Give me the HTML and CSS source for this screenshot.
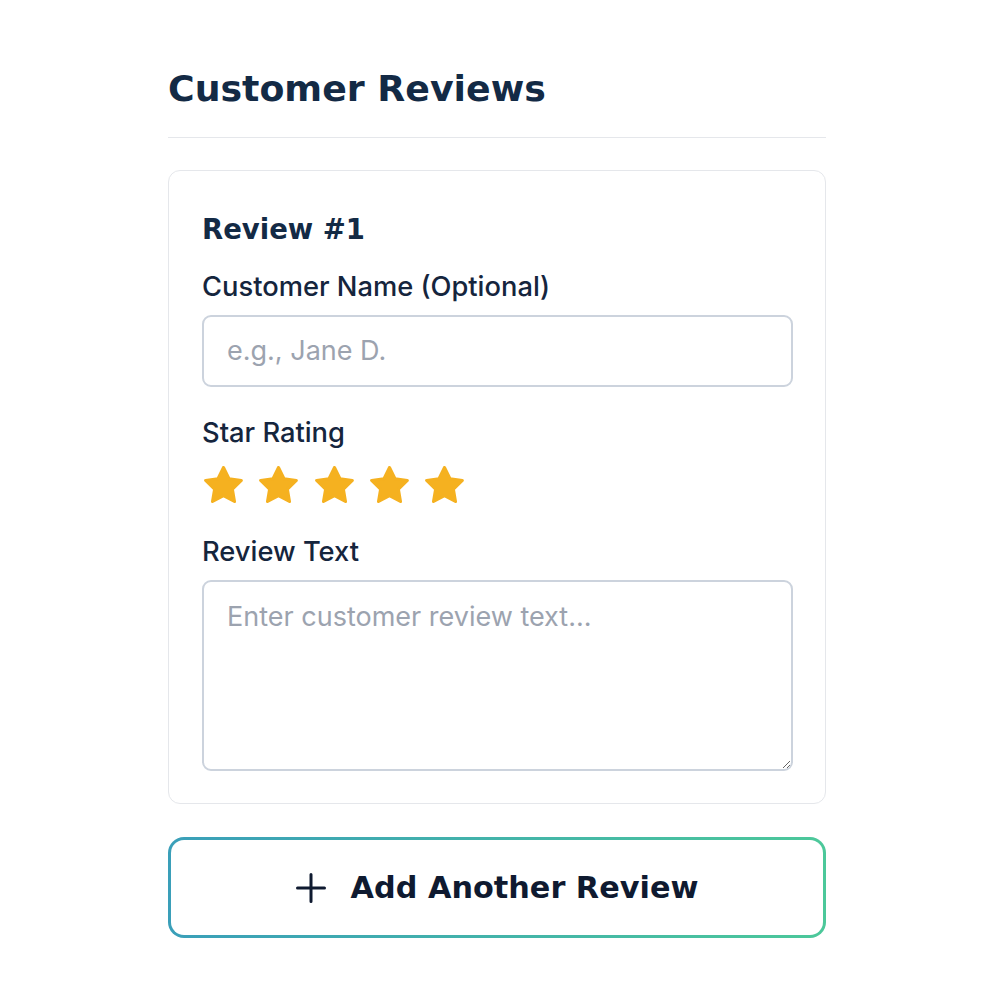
FILE: index.html
```html
<!DOCTYPE html>
<html>
<head>
<meta charset="utf-8">
<link rel="stylesheet" href="styles.css">
</head>
<body>
<div class="page">
  <h2 class="title">Customer Reviews</h2>
  <div class="card">
    <h3 class="card-title">Review #1</h3>
    <label class="label label-first">Customer Name (Optional)</label>
    <input class="input" type="text" placeholder="e.g., Jane D.">
    <label class="label label-star">Star Rating</label>
    <div class="stars">
      <svg class="star" viewBox="1.8 1.8 20.4 19.5"><path d="M12 2.6l2.9 5.9 6.5.9-4.7 4.6 1.1 6.5L12 17.4l-5.8 3.1 1.1-6.5L2.6 9.4l6.5-.9z"/></svg>
      <svg class="star" viewBox="1.8 1.8 20.4 19.5"><path d="M12 2.6l2.9 5.9 6.5.9-4.7 4.6 1.1 6.5L12 17.4l-5.8 3.1 1.1-6.5L2.6 9.4l6.5-.9z"/></svg>
      <svg class="star" viewBox="1.8 1.8 20.4 19.5"><path d="M12 2.6l2.9 5.9 6.5.9-4.7 4.6 1.1 6.5L12 17.4l-5.8 3.1 1.1-6.5L2.6 9.4l6.5-.9z"/></svg>
      <svg class="star" viewBox="1.8 1.8 20.4 19.5"><path d="M12 2.6l2.9 5.9 6.5.9-4.7 4.6 1.1 6.5L12 17.4l-5.8 3.1 1.1-6.5L2.6 9.4l6.5-.9z"/></svg>
      <svg class="star" viewBox="1.8 1.8 20.4 19.5"><path d="M12 2.6l2.9 5.9 6.5.9-4.7 4.6 1.1 6.5L12 17.4l-5.8 3.1 1.1-6.5L2.6 9.4l6.5-.9z"/></svg>
    </div>
    <label class="label label-text">Review Text</label>
    <textarea class="textarea" placeholder="Enter customer review text..."></textarea>
  </div>
  <button class="add-btn">
    <svg class="plus" viewBox="0 0 30 30"><path d="M15 1.5v27M1.5 15h27"/></svg>
    <span>Add Another Review</span>
  </button>
</div>
</body>
</html>
```

FILE: styles.css
```css
* { box-sizing: border-box; }
html, body { margin: 0; padding: 0; background: #ffffff; }
body { font-family: Inter, "Noto Sans", sans-serif; color: #15253d; }
.page {
  width: 658px;
  margin-left: 168px;
  padding-top: 67px;
}
.title {
  margin: 0;
  font-family: "DejaVu Sans", sans-serif;
  font-weight: 700;
  font-size: 36.3px;
  line-height: 44px;
  color: #132a45;
  padding-bottom: 26px;
  border-bottom: 1.5px solid #e5e7eb;
}
.card {
  margin-top: 32px;
  border: 1.5px solid #e5e7eb;
  border-radius: 12px;
  padding: 37.5px 32px 32.5px 33px;
  display: flex;
  flex-direction: column;
}
.card-title {
  margin: 0;
  font-family: "DejaVu Sans", sans-serif;
  font-weight: 700;
  font-size: 27.5px;
  line-height: 40px;
  color: #132a45;
}
.label {
  font-size: 27.3px;
  font-weight: 500;
  line-height: 40px;
  color: #15253d;
  margin-bottom: 8px;
}
.label-first { margin-top: 18px; }
.label-star { margin-top: 26px; margin-bottom: 13px; }
.label-text { margin-top: 29px; }
.input {
  width: 100%;
  height: 72px;
  border: 2px solid #ccd3dd;
  border-radius: 9px;
  padding: 0 23px;
  font-family: Inter, sans-serif;
  font-size: 27px;
  color: #15253d;
  outline: none;
}
.input::placeholder, .textarea::placeholder { color: #9ca3af; }
.stars {
  display: flex;
  gap: 16.25px;
  margin-left: 2px;
}
.star {
  width: 39px;
  height: 37px;
  fill: #f5b120;
  stroke: #f5b120;
  stroke-width: 1.6;
  stroke-linejoin: round;
}
.textarea {
  width: 100%;
  height: 191px;
  border: 2px solid #ccd3dd;
  border-radius: 9px;
  padding: 15px 23px;
  font-family: Inter, sans-serif;
  font-size: 27px;
  line-height: 40px;
  color: #15253d;
  outline: none;
  resize: vertical;
  display: block;
}
.add-btn {
  margin-top: 33px;
  width: 100%;
  height: 101px;
  border: 3px solid transparent;
  border-radius: 16px;
  background: linear-gradient(#fff, #fff) padding-box, linear-gradient(90deg, #3a9fb9, #4cc89a) border-box;
  display: flex;
  align-items: center;
  justify-content: center;
  gap: 25px;
  font-family: "DejaVu Sans", sans-serif;
  font-weight: 700;
  font-size: 30.3px;
  color: #0f1a30;
  cursor: pointer;
  padding: 0;
}
.plus {
  width: 30px;
  height: 30px;
  stroke: #0f1a30;
  stroke-width: 3;
  stroke-linecap: round;
  fill: none;
}
```
